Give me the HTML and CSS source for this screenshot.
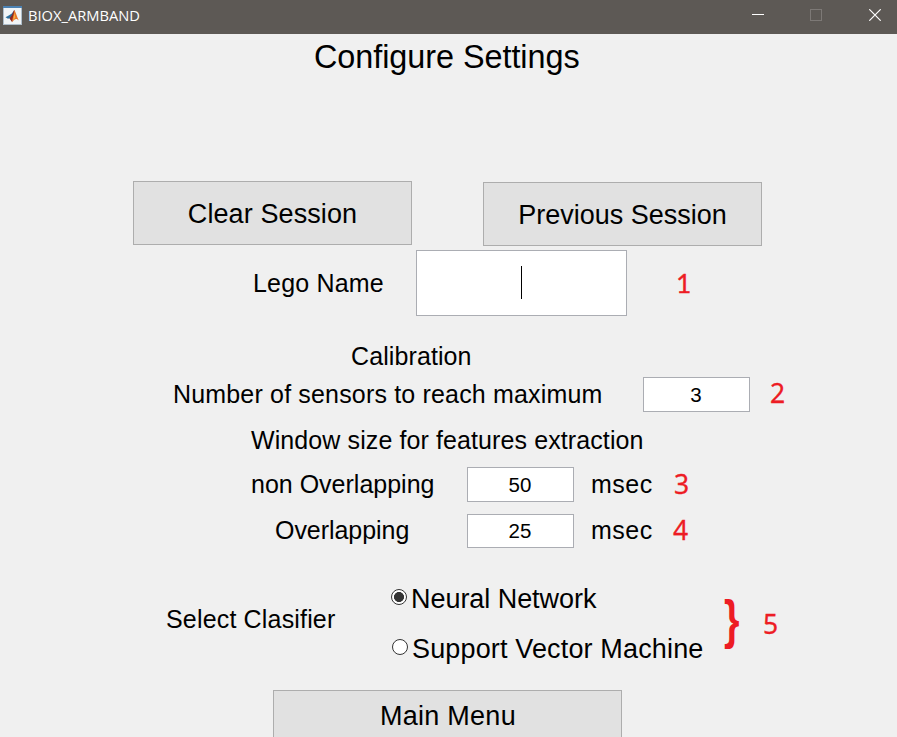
FILE: index.html
```
<!DOCTYPE html>
<html lang="en">
<head>
<meta charset="utf-8">
<title>BIOX_ARMBAND</title>
<link rel="stylesheet" href="styles.css">
</head>
<body>
<header class="titlebar">
  <svg class="logo" width="19" height="19" viewBox="0 0 19 19">
    <rect x="0" y="0" width="19" height="19" fill="#aebdca"/>
    <rect x="1" y="2" width="17" height="16" fill="#f1f4f6"/>
    <rect x="0" y="0" width="19" height="2" fill="#4c82b3"/>
    <path d="M2.5 11.2 6.2 9.2 8.8 7.5 11 4.5 10.5 9 8 13.2 6.5 12.3 5 12.8Z" fill="#2d6f9d"/>
    <path d="M6.5 12.5 9 9 11 4.2 12 4.8 11 12 9 16Z" fill="#8f2520"/>
    <path d="M11.2 4.2C12.6 5 13.5 10 16 14.6 13.5 12.5 12 12.3 9.2 16.2 9 13 10.8 10 11.2 4.2Z" fill="#e5752a"/>
    <path d="M11.5 7 12.3 11.5 10 14.5Z" fill="#f8b341"/>
  </svg>
  <span class="app-name">BIOX_ARMBAND</span>
  <div class="controls">
    <svg width="12" height="12" viewBox="0 0 12 12"><path d="M0 5.5H12" stroke="#fff"/></svg>
    <svg width="12" height="12" viewBox="0 0 12 12"><rect x=".5" y=".5" width="11" height="11" fill="none" stroke="#7d7976"/></svg>
    <svg class="close" width="12" height="12" viewBox="0 0 12 12"><path d="M.3.3 11.7 11.7M11.7.3.3 11.7" stroke="#fff" stroke-width="1.2"/></svg>
  </div>
</header>
<main>
  <h1>Configure Settings</h1>
  <div class="row sessions">
    <button class="btn">Clear Session</button>
    <button class="btn previous">Previous Session</button>
  </div>
  <div class="row lego">
    <span class="label">Lego Name</span>
    <div class="field name-field"><i class="caret"></i></div>
    <span class="note">1</span>
  </div>
  <div class="row calibration"><span class="label">Calibration</span></div>
  <div class="row sensors">
    <span class="label">Number of sensors to reach maximum</span>
    <div class="field">3</div>
    <span class="note">2</span>
  </div>
  <div class="row window-size"><span class="label">Window size for features extraction</span></div>
  <div class="row non-overlap">
    <span class="label">non Overlapping</span>
    <div class="field">50</div>
    <span class="unit">msec</span>
    <span class="note">3</span>
  </div>
  <div class="row overlap">
    <span class="label">Overlapping</span>
    <div class="field">25</div>
    <span class="unit">msec</span>
    <span class="note">4</span>
  </div>
  <div class="row classifier">
    <span class="label">Select Clasifier</span>
    <div class="options">
      <div class="option"><i class="radio on"></i><span>Neural Network</span></div>
      <div class="option second"><i class="radio"></i><span>Support Vector Machine</span></div>
    </div>
    <span class="brace">}</span>
    <span class="note">5</span>
  </div>
  <button class="btn main-menu">Main Menu</button>
</main>
</body>
</html>
```
FILE: styles.css
```
* { box-sizing: border-box; }
body {
  margin: 0;
  height: 737px;
  overflow: hidden;
  background: #f0f0f0;
  color: #000;
  font-family: "Liberation Sans", Arial, sans-serif;
}
.titlebar {
  display: flex;
  height: 34px;
  padding-left: 3px;
  background: #5d5955;
}
.logo { margin-top: 6px; }
.app-name {
  margin-left: 6px;
  font: 14.7px/31px "Open Sans", sans-serif;
  color: #fff;
}
.controls {
  display: flex;
  gap: 46px;
  margin: 9px 16px 0 auto;
}
.close { margin-left: 1px; }
main { height: 703px; overflow: hidden; }
h1 {
  margin: 0;
  padding-left: 314px;
  height: 147px;
  font-size: 32.4px;
  font-weight: 400;
  line-height: 47px;
  letter-spacing: -.05px;
  white-space: nowrap;
}
.row { display: flex; align-items: center; white-space: nowrap; }
.label, .unit { flex: none; font-size: 25px; letter-spacing: .17px; }
.btn {
  display: block;
  flex: none;
  width: 279px;
  height: 64px;
  padding: 3px 0 0;
  border: 1px solid #adadad;
  background: #e1e1e1;
  color: #000;
  font: 27px "Liberation Sans", Arial, sans-serif;
  letter-spacing: .1px;
}
.field {
  display: flex;
  flex: none;
  align-items: center;
  justify-content: center;
  width: 107px;
  height: 100%;
  padding-right: 1px;
  border: 1px solid #abadb3;
  background: #fff;
  font-size: 20.5px;
}
.note {
  flex: none;
  font: 26.5px/32px "Noto Sans", sans-serif;
  color: #ed1c24;
  -webkit-text-stroke: .3px #ed1c24;
}
.sessions { height: 69px; padding-left: 133px; align-items: flex-start; }
.previous { margin: 1px 0 0 71px; letter-spacing: 0; }
.lego { height: 66px; padding-left: 253px; }
.lego .label { width: 163px; }
.name-field { width: 211px; padding: 0 0 2px; }
.caret { width: 1px; height: 33px; background: #000; }
.lego .note { margin-left: 49px; font-family: Lato, sans-serif; }
.calibration { height: 27px; margin-top: 27px; padding-left: 351px; }
.calibration .label { letter-spacing: .1px; }
.sensors { height: 35px; margin-top: 7px; padding-left: 173px; }
.sensors .label { width: 470px; }
.sensors .note { margin: -3px 0 0 20px; }
.window-size { height: 27px; margin-top: 15px; padding-left: 251px; }
.window-size .label { letter-spacing: .1px; }
.non-overlap { height: 35px; margin-top: 13px; padding-left: 251px; }
.non-overlap .label { width: 216px; letter-spacing: 0; }
.unit { width: 83px; margin-left: 17px; letter-spacing: .5px; }
.non-overlap .note { margin-top: -2px; }
.overlap { height: 34px; margin-top: 12px; padding-left: 275px; }
.overlap .label, .overlap .unit { margin-top: -1px; }
.overlap .label { width: 192px; letter-spacing: -.05px; }
.overlap .note { margin: -2px 0 0 -1px; }
.classifier { height: 100px; margin-top: 25px; padding-left: 166px; }
.classifier .label { width: 225px; margin-top: -7px; }
.options { width: 333px; font-size: 27px; }
.option { display: flex; align-items: center; height: 50px; gap: 4px; padding-top: 1px; }
.option span { padding-top: 1px; letter-spacing: -.05px; }
.option.second { padding-left: 1px; }
.second span { letter-spacing: .15px; }
.radio {
  flex: none;
  width: 16px;
  height: 16px;
  margin-top: -4px;
  border: 1px solid #333;
  border-radius: 50%;
  background: #fff;
}
.radio.on { background: radial-gradient(circle, #333 4.7px, #fff 5.3px); }
.brace {
  width: 39px;
  margin-top: -6px;
  font: 700 53px/60px "Liberation Sans", sans-serif;
  color: #ed1c24;
  transform: scaleX(.75);
  transform-origin: left;
}
.classifier .note { margin-top: 2px; }
.main-menu { width: 349px; height: 52px; margin: 17px 0 0 273px; padding: 1px 0 0 1px; letter-spacing: .25px; }
```
